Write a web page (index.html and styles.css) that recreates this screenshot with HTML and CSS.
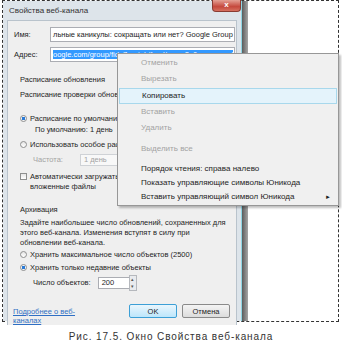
FILE: index.html
```html
<!DOCTYPE html>
<html lang="ru">
<head>
  <meta charset="UTF-8" />
  <title>Свойства веб-канала</title>
  <link rel="stylesheet" href="styles.css">
</head>
<body>
  <div class="page">
    <div class="sheet">
      <div class="window">
        <div class="titlebar">
          <span>Свойства веб-канала</span>
          <div class="close">x</div>
        </div>

        <div class="client">
          <div class="field-row">
            <span class="label">Имя:</span>
            <div class="field">льные каникулы: сокращать или нет? Google Group</div>
          </div>
          <div class="field-row">
            <span class="label">Адрес:</span>
            <div class="field"><span class="selected">oogle.com/group/fido7.ru.job/feed/rss_v2_0_msgs.xml</span></div>
          </div>

          <div class="section">
            <!-- this part is covered by the context menu on the right -->
            <div class="covered">
              <div class="heading">Расписание обновления</div>
              <div class="line gap-5">Расписание проверки обновлений веб-канала:</div>

              <div class="option gap-14"><span class="radio checked"></span>Расписание по умолчанию</div>
              <div class="line sub gap-1">По умолчанию: 1 день</div>
              <div class="option gap-5"><span class="radio"></span>Использовать особое расписание</div>
              <div class="freq-row">
                <span class="muted">Частота:</span>
                <div class="small-field">1 день</div>
              </div>
              <div class="option check-row"><span class="checkbox"></span>Автоматически загружать<br>вложенные файлы</div>
            </div>

            <div class="heading archive">Архивация</div>
            <p class="hint">Задайте наибольшее число обновлений, сохраненных для этого веб-канала. Изменения вступят в силу при обновлении веб-канала.</p>
            <div class="option gap-2"><span class="radio"></span>Хранить максимальное число объектов (2500)</div>
            <div class="option gap-3"><span class="radio checked"></span>Хранить только недавние объекты</div>
            <div class="count-row">
              <span>Число объектов:</span>
              <div class="spin-field">200</div>
              <div class="spinner"><span>▴</span><span>▾</span></div>
            </div>
          </div>

          <div class="footer">
            <a class="link" href="#">Подробнее о веб-<br>каналах</a>
            <div class="buttons">
              <button class="btn default">OK</button>
              <button class="btn">Отмена</button>
            </div>
          </div>
        </div>
      </div>
      <div class="shadow"></div>

      <div class="menu">
        <div class="item disabled">Отменить</div>
        <div class="item disabled">Вырезать</div>
        <div class="item hover">Копировать</div>
        <div class="item disabled">Вставить</div>
        <div class="item disabled">Удалить</div>
        <div class="sep"></div>
        <div class="item disabled">Выделить все</div>
        <div class="sep"></div>
        <div class="menu-tail">
          <div class="item">Порядок чтения: справа налево</div>
          <div class="item">Показать управляющие символы Юникода</div>
          <div class="item">Вставить управляющий символ Юникода<span class="arrow">►</span></div>
        </div>
      </div>
    </div>

    <p class="caption">Рис. 17.5. Окно Свойства веб-канала</p>
  </div>
</body>
</html>
```

FILE: styles.css
```css
:root {
  --frame: #dde4ea;
  --client: #efefef;
  --text: #1e1e1e;
  --muted: #a3a3a3;
  --border: #abadb3;
  --select: #3399ff;
}

* {
  box-sizing: border-box;
}

body {
  margin: 0;
  background: #fff;
  font-family: "Liberation Sans", Arial, sans-serif;
  color: var(--text);
}

.page {
  width: 342px;
  height: 345px;
  overflow: hidden;
}

.sheet {
  position: relative;
  display: flex;
  margin-left: 2px;
  width: 337px;
  height: 322px;
  border: 1px dashed #333;
  background: #fff;
}

.window {
  display: flex;
  flex-direction: column;
  width: 239px;
  padding: 0 4px;
  background: var(--frame);
  border-right: 1px solid #8fd6e4;
}

.titlebar {
  position: relative;
  height: 19px;
  padding-left: 2px;
  font-size: 8px;
  line-height: 19px;
  color: #333;
}

.close {
  position: absolute;
  top: -1px;
  right: -4px;
  width: 29px;
  height: 12px;
  border: 1px solid #8a3b32;
  border-top: none;
  border-radius: 0 0 4px 4px;
  background: linear-gradient(#e4a195, #c5493d 60%, #d6705f);
  color: #fff;
  font-size: 8px;
  font-weight: bold;
  line-height: 10px;
  text-align: center;
}

.client {
  flex: 1;
  padding: 6px 0 0 6px;
  background: var(--client);
  border: 1px solid #b9c3cc;
  border-bottom: none;
  font-size: 7.5px;
  line-height: 10px;
}

.field-row {
  display: flex;
  align-items: center;
  height: 15px;
  margin-bottom: 5px;
}

.label {
  width: 36px;
}

.field {
  width: 185px;
  height: 15px;
  padding-left: 2px;
  border: 1px solid var(--border);
  background: #fff;
  white-space: nowrap;
  overflow: hidden;
  line-height: 13px;
}

.selected {
  background: var(--select);
  color: #fff;
}

.section {
  padding-left: 6px;
}

.covered {
  width: 97px;
  overflow: hidden;
}

.heading {
  margin-top: 8px;
}

.line,
.option {
  white-space: nowrap;
}

.gap-1 { margin-top: 1px; }
.gap-2 { margin-top: 2px; }
.gap-3 { margin-top: 3px; }
.gap-5 { margin-top: 5px; }
.gap-14 { margin-top: 14px; }

.sub {
  padding-left: 15px;
}

.option {
  display: flex;
  align-items: flex-start;
}

.radio,
.checkbox {
  flex: none;
  width: 7px;
  height: 7px;
  margin: 1px 3px 0 0;
  border: 1px solid #8e8f8f;
  background: linear-gradient(#e6e6e6, #fff);
}

.radio {
  border-radius: 50%;
}

.radio.checked {
  background: radial-gradient(circle, #2a7ad6 0 45%, #f4f4f4 50%);
}

.freq-row {
  display: flex;
  align-items: center;
  height: 12px;
  margin-top: 4px;
  padding-left: 13px;
}

.muted {
  color: var(--muted);
}

.small-field {
  flex: none;
  width: 60px;
  height: 12px;
  margin-left: 17px;
  padding-left: 3px;
  border: 1px solid #cfd2d6;
  background: #f8f8f8;
  color: var(--muted);
  line-height: 10px;
}

.check-row {
  margin-top: 6px;
}

.archive {
  margin-top: 13px;
}

.hint {
  width: 212px;
  margin: 3px 0 0;
}

.count-row {
  display: flex;
  align-items: center;
  height: 16px;
  margin-top: 2px;
  padding-left: 13px;
}

.spin-field {
  width: 31px;
  height: 12px;
  margin-left: 7px;
  padding-left: 3px;
  border: 1px solid var(--border);
  border-right: none;
  background: #fff;
  line-height: 10px;
}

.spinner {
  display: flex;
  flex-direction: column;
  width: 8px;
  height: 16px;
  border: 1px solid #b5b8bd;
  background: #e9ebee;
  font-size: 5px;
  line-height: 7px;
  text-align: center;
  color: #555;
}

.footer {
  display: flex;
  justify-content: space-between;
  margin-top: 13px;
  padding-right: 6px;
}

.link {
  margin: 3px 0 0 -1px;
  color: #2f6fc4;
  font-size: 7.5px;
  line-height: 9px;
}

.buttons {
  display: flex;
  gap: 5px;
}

.btn {
  width: 48px;
  height: 14px;
  padding: 0;
  border: 1px solid #8a8a8a;
  border-radius: 2px;
  background: linear-gradient(#f4f4f4, #dcdcdc);
  font-family: inherit;
  font-size: 7.5px;
  color: var(--text);
}

.btn.default {
  border-color: #3c9fd6;
  background: linear-gradient(#eaf6fd, #bde6fb);
}

.shadow {
  width: 6px;
  background: linear-gradient(90deg, #5c5c5c, #a6a6a6);
}

.menu {
  position: absolute;
  left: 114px;
  top: 52px;
  width: 222px;
  padding: 1px;
  border: 1px solid #979797;
  background: #f0f0f0;
  box-shadow: 2px 2px 2px rgba(0, 0, 0, 0.25);
  font-size: 8px;
}

.item {
  position: relative;
  height: 16px;
  padding-left: 22px;
  line-height: 16px;
  white-space: nowrap;
}

.item.disabled {
  color: var(--muted);
}

.item.hover {
  margin-top: 1px;
  border: 1px solid #a8d8ec;
  background: #e4f3fb;
  line-height: 14px;
}

.menu-tail .item {
  height: 14px;
  line-height: 14px;
}

.sep {
  height: 5px;
}

.arrow {
  position: absolute;
  right: 6px;
  font-size: 6px;
}

.caption {
  margin: 9px 0 0;
  font-size: 10px;
  line-height: 12px;
  letter-spacing: 0.9px;
  text-align: center;
  color: #333;
}
```
